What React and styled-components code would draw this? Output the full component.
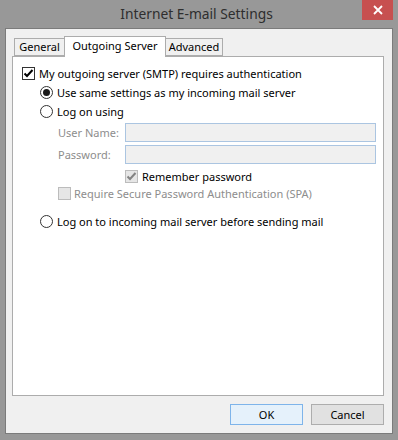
import React from "react";
import styled, { createGlobalStyle } from "styled-components";

const Global = createGlobalStyle`
  html, body { margin: 0; padding: 0; background: #989898; }
  body { font-family: "Noto Sans", "Open Sans", sans-serif; }
  * { box-sizing: border-box; }
`;

const Frame = styled.div`
  width: 398px;
  height: 440px;
  background: #989898;
  display: flex;
  flex-direction: column;
  padding: 0 5px 6px 5px;
`;

const TitleBar = styled.div`
  height: 28px;
  display: grid;
  grid-template-columns: 1fr auto 1fr;
  margin: 0 -5px;
  padding-right: 5px;
`;

const Title = styled.div`
  grid-column: 2;
  align-self: center;
  font-size: 13.8px;
  color: #2e2e2e;
  padding-bottom: 1px;
`;

const Close = styled.div`
  grid-column: 3;
  justify-self: end;
  align-self: start;
  width: 31px;
  height: 20px;
  background: #c75050;
  display: flex;
  align-items: center;
  justify-content: center;
`;

const Client = styled.div`
  flex: 1;
  background: #f0f0f0;
  border: 1px solid #7b7b7b;
  padding: 7px 8px 8px 6px;
  display: flex;
  flex-direction: column;
`;

const TabStrip = styled.div`
  display: flex;
  align-items: flex-end;
  padding-left: 2px;
  height: 20px;
  position: relative;
  z-index: 1;
`;

const Tab = styled.div`
  width: ${(p) => p.$w}px;
  height: ${(p) => (p.$active ? 21 : 18)}px;
  margin-left: ${(p) => (p.$first ? 0 : -1)}px;
  border: 1px solid #acacac;
  border-bottom: ${(p) => (p.$active ? "none" : "1px solid #acacac")};
  background: ${(p) => (p.$active ? "#ffffff" : "#f0f0f0")};
  font-size: 11px;
  color: #000;
  display: flex;
  justify-content: center;
  align-items: ${(p) => (p.$active ? "flex-start" : "center")};
  padding-top: ${(p) => (p.$active ? 1 : 0)}px;
  margin-bottom: ${(p) => (p.$active ? -1 : 0)}px;
  z-index: ${(p) => (p.$active ? 2 : 1)};
  line-height: 16px;
`;

const Panel = styled.div`
  height: 340px;
  background: #fff;
  border: 1px solid #acacac;
  padding: 7px 0 0 9px;
  display: flex;
  flex-direction: column;
`;

const Row = styled.div`
  display: flex;
  align-items: center;
  height: ${(p) => p.$h || 19}px;
  margin-top: ${(p) => p.$mt || 0}px;
  padding-left: ${(p) => p.$indent || 0}px;
  font-size: 11px;
  color: ${(p) => (p.$disabled ? "#8d8d8d" : "#000")};
  gap: ${(p) => p.$gap ?? 4}px;
  white-space: nowrap;
`;

const Box = styled.div`
  width: 13px;
  height: 13px;
  flex: none;
  border: 1px solid ${(p) => (p.$disabled ? "#bcbcbc" : "#333")};
  background: ${(p) => (p.$disabled ? "#e6e6e6" : "#fff")};
  display: flex;
  align-items: center;
  justify-content: center;
`;

const Radio = styled.div`
  width: 13px;
  height: 13px;
  flex: none;
  border-radius: 50%;
  border: 1px solid #333;
  background: #fff;
  display: flex;
  align-items: center;
  justify-content: center;
  &::after {
    content: "";
    display: ${(p) => (p.$checked ? "block" : "none")};
    width: 7px;
    height: 7px;
    border-radius: 50%;
    background: #1a1a1a;
  }
`;

const FieldLabel = styled.div`
  width: 67px;
  flex: none;
  color: #8d8d8d;
`;

const Input = styled.div`
  width: 251px;
  height: 19px;
  border: 1px solid #abc5e1;
  background: #f0f0f0;
`;

const Footer = styled.div`
  display: flex;
  justify-content: flex-end;
  gap: 8px;
  margin-top: 8px;
`;

const Button = styled.div`
  width: 73px;
  height: 21px;
  border: 1px solid ${(p) => (p.$default ? "#7eb4ea" : "#adadad")};
  background: ${(p) => (p.$default ? "#e5f1fb" : "#e1e1e1")};
  font-size: 11px;
  color: #000;
  display: flex;
  align-items: center;
  justify-content: center;
`;

const Check = ({ color = "#000" }) => (
  <svg width="11" height="11" viewBox="0 0 11 11">
    <path d="M1.5 5.5 L4 8 L9.5 2" fill="none" stroke={color} strokeWidth="2" />
  </svg>
);

export default function App() {
  return (
    <>
      <Global />
      <Frame>
        <TitleBar>
          <Title>Internet E-mail Settings</Title>
          <Close>
            <svg width="10" height="10" viewBox="0 0 10 10">
              <path d="M1 1 L9 9 M9 1 L1 9" stroke="#fff" strokeWidth="1.8" />
            </svg>
          </Close>
        </TitleBar>
        <Client>
          <TabStrip>
            <Tab $w={51} $first>General</Tab>
            <Tab $w={102} $active>Outgoing Server</Tab>
            <Tab $w={58}>Advanced</Tab>
          </TabStrip>
          <Panel>
            <Row>
              <Box><Check /></Box>
              My outgoing server (SMTP) requires authentication
            </Row>
            <Row $indent={18}>
              <Radio $checked />
              Use same settings as my incoming mail server
            </Row>
            <Row $indent={18}>
              <Radio />
              Log on using
            </Row>
            <Row $indent={36} $mt={2} $gap={0}>
              <FieldLabel>User Name:</FieldLabel>
              <Input />
            </Row>
            <Row $indent={36} $mt={3} $gap={0}>
              <FieldLabel>Password:</FieldLabel>
              <Input />
            </Row>
            <Row $indent={103} $mt={3} $disabled>
              <Box $disabled><Check color="#838383" /></Box>
              <span style={{ color: "#000" }}>Remember password</span>
            </Row>
            <Row $indent={36} $h={17} $mt={-1} $gap={3} $disabled>
              <Box $disabled />
              Require Secure Password Authentication (SPA)
            </Row>
            <Row $indent={18} $mt={10}>
              <Radio />
              Log on to incoming mail server before sending mail
            </Row>
          </Panel>
          <Footer>
            <Button $default>OK</Button>
            <Button>Cancel</Button>
          </Footer>
        </Client>
      </Frame>
    </>
  );
}
